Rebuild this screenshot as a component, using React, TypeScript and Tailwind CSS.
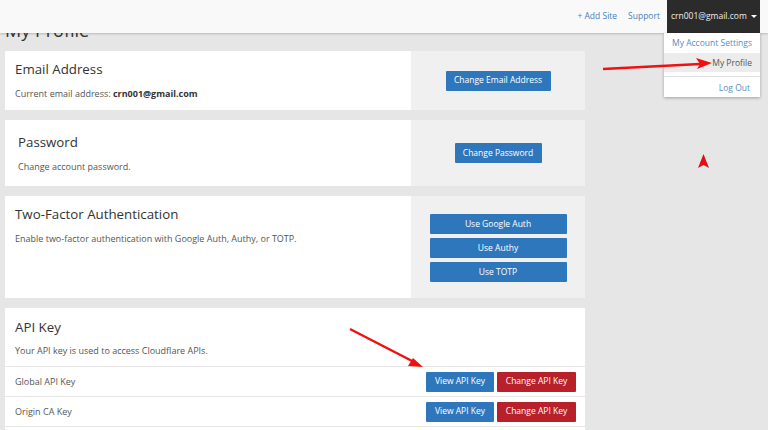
import React from "react";

function Btn({ children, red, wide, className = "" }: { children: React.ReactNode; red?: boolean; wide?: boolean; className?: string }) {
  return (
    <button
      className={`flex items-center justify-center h-[20px] text-[8.5px] text-white rounded-[1px] ${red ? "bg-[#b8202a]" : "bg-[#2f77bd]"} ${wide ? "w-[137px]" : ""} ${className}`}
    >
      {children}
    </button>
  );
}

function Card({ h, title, desc, titleClass = "pl-[10px] pt-[8px]", right, rightClass = "" }: { h: string; title: string; desc: React.ReactNode; titleClass?: string; right: React.ReactNode; rightClass?: string }) {
  return (
    <section className={`flex ${h} bg-white`}>
      <div className={`w-[406px] ${titleClass}`}>
        <h2 className="text-[13.3px] leading-[20px] text-[#333]">{title}</h2>
        <p className="text-[9px] leading-[14px] text-[#555] mt-[8px]">{desc}</p>
      </div>
      <div className={`flex-1 bg-[#f0f0f0] flex flex-col items-center justify-center gap-[4px] ${rightClass}`}>{right}</div>
    </section>
  );
}

function KeyRow({ label }: { label: string }) {
  return (
    <div className="flex items-center h-[30px] border-t border-[#e6e6e6] pl-[10px] pr-[9px]">
      <span className="flex-1 text-[9px] text-[#555]">{label}</span>
      <div className="flex gap-[3px]">
        <Btn className="w-[68px]">View API Key</Btn>
        <Btn red className="w-[79px]">Change API Key</Btn>
      </div>
    </div>
  );
}

export default function App() {
  return (
    <div className="relative w-[768px] h-[430px] overflow-hidden bg-[#e6e6e6] font-['Open_Sans',sans-serif]">
      <header className="relative z-10 h-[33px] bg-[#f9f9f9] shadow-[0_1px_2px_rgba(0,0,0,0.2)] flex items-center justify-end pr-[8px]">
        <a className="text-[8.5px] text-[#4a80b8] mr-[11px]">+ Add Site</a>
        <a className="text-[8.5px] text-[#4a80b8] mr-[7px]">Support</a>
        <div className="relative w-[93px] h-[33px] bg-[#2b2b2b] flex items-center pl-[4px] text-[8.5px] text-[#eee]">
          crn001@gmail.com
          <span className="ml-[4px] w-0 h-0 border-l-[3px] border-r-[3px] border-t-[3px] border-l-transparent border-r-transparent border-t-white" />
          <div className="absolute top-[33px] right-0 w-[96px] h-[64px] bg-white shadow-[0_1px_3px_rgba(0,0,0,0.3)] text-right">
            <div className="h-[20px] pt-[3px] pr-[8px] text-[8.5px] leading-[14px] text-[#5a8cc0]">My Account Settings</div>
            <div className="h-[19px] bg-[#ececec] pr-[8px] text-[8.5px] leading-[19px] text-[#555]">My Profile</div>
            <div className="mt-[4px] border-t border-[#e0e0e0] pr-[10px] pt-[4px] text-[8.5px] leading-[14px] text-[#5a8cc0]">Log Out</div>
          </div>
        </div>
      </header>

      <main className="pl-[5px] w-[585px]">
        <h1 className="-mt-[15px] h-[33px] text-[18px] leading-[24px] text-[#333]">My Profile</h1>
        <div className="flex flex-col gap-[10px]">
          <Card
            h="h-[59px]"
            title="Email Address"
            desc={<>Current email address: <b className="text-[#333]">crn001@gmail.com</b></>}
            right={<Btn className="w-[105px]">Change Email Address</Btn>}
          />
          <Card
            h="h-[66px]"
            titleClass="pl-[13px] pt-[12px]"
            title="Password"
            desc="Change account password."
            right={<Btn className="w-[87px]">Change Password</Btn>}
          />
          <Card
            h="h-[102px]"
            title="Two-Factor Authentication"
            desc="Enable two-factor authentication with Google Auth, Authy, or TOTP."
            rightClass="pt-[2px]"
            right={
              <>
                <Btn wide>Use Google Auth</Btn>
                <Btn wide>Use Authy</Btn>
                <Btn wide>Use TOTP</Btn>
              </>
            }
          />
          <section className="bg-white h-[140px]">
            <div className="h-[58px] pl-[10px]">
              <h2 className="text-[13.3px] leading-[20px] text-[#333] pt-[9px] h-[29px]">API Key</h2>
              <p className="text-[9px] leading-[14px] text-[#555] mt-[7px]">Your API key is used to access Cloudflare APIs.</p>
            </div>
            <KeyRow label="Global API Key" />
            <KeyRow label="Origin CA Key" />
            <div className="border-t border-[#e6e6e6]" />
          </section>
        </div>
      </main>

      <svg className="absolute inset-0 z-20 pointer-events-none" width="768" height="430" viewBox="0 0 768 430">
        <path d="M603 69 L700 64" stroke="#f01010" strokeWidth="2.500" />
        <path d="M696 58 L712 63 L697 69 L700 64 Z" fill="#f01010" />
        <path d="M350 329 L414 362" stroke="#f01010" strokeWidth="2.500" />
        <path d="M413 358 L423 367 L408 366 Z" fill="#f01010" />
        <path d="M703.500 154 L709 168 L703.500 165 L698 168 Z" fill="#e01010" />
      </svg>
    </div>
  );
}
